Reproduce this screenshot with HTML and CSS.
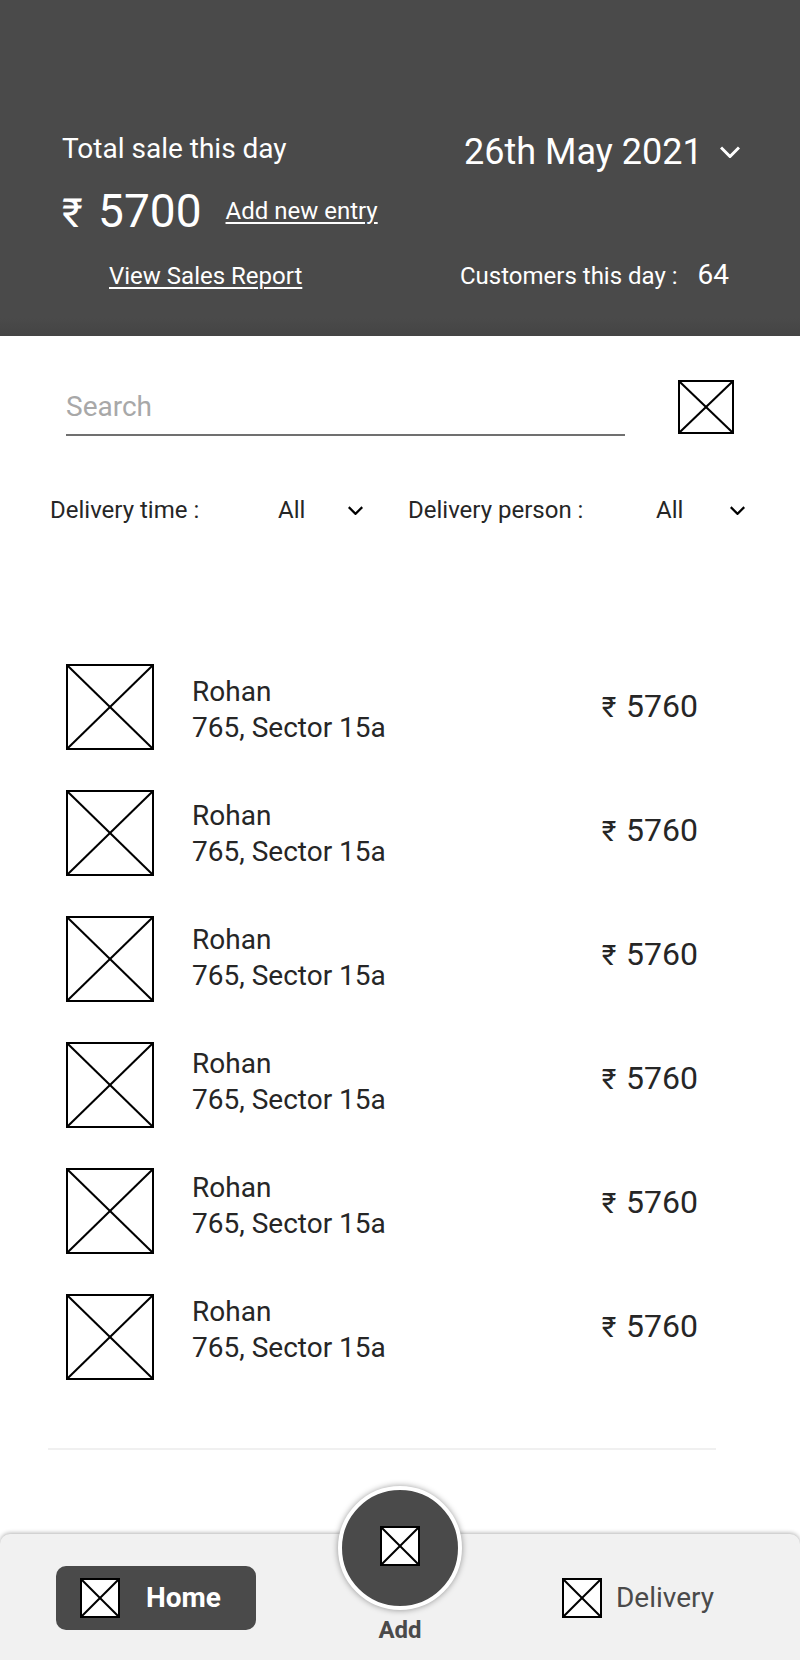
FILE: index.html
```html
<!DOCTYPE html>
<html lang="en">
<head>
  <meta charset="UTF-8">
  <meta name="viewport" content="width=device-width, initial-scale=1.0">
  <title>Daily Sales</title>
  <link rel="stylesheet" href="styles.css">
</head>
<body>
  <!-- shared icon shapes -->
  <svg class="sprite" aria-hidden="true">
    <symbol id="cross">
      <line x1="0" y1="0" x2="100%" y2="100%"/>
      <line x1="100%" y1="0" x2="0" y2="100%"/>
    </symbol>
    <symbol id="chevron" viewBox="0 0 20 12">
      <path d="M1 1.5 L10 10.5 L19 1.5"/>
    </symbol>
  </svg>

  <header class="header">
    <div class="row sale-row">
      <span class="total-label">Total sale this day</span>
      <div class="dropdown date">
        <select aria-label="Date">
          <option>26th May 2021</option>
        </select>
        <svg class="chevron" aria-hidden="true"><use href="#chevron"/></svg>
      </div>
    </div>
    <div class="row amount-row">
      <span class="total"><span class="rupee">₹</span> 5700</span>
      <a href="#">Add new entry</a>
    </div>
    <div class="row report-row">
      <a href="#">View Sales Report</a>
      <div class="customers">Customers this day : <span>64</span></div>
    </div>
  </header>

  <main>
    <form class="search">
      <input type="text" placeholder="Search" aria-label="Search">
      <button type="submit" aria-label="Search">
        <svg class="box" aria-hidden="true"><use href="#cross"/></svg>
      </button>
    </form>

    <div class="filters">
      <label for="time">Delivery time :</label>
      <div class="dropdown">
        <select id="time">
          <option>All</option>
        </select>
        <svg class="chevron" aria-hidden="true"><use href="#chevron"/></svg>
      </div>
      <label for="person">Delivery person :</label>
      <div class="dropdown">
        <select id="person">
          <option>All</option>
        </select>
        <svg class="chevron" aria-hidden="true"><use href="#chevron"/></svg>
      </div>
    </div>

    <div class="sales">
      <div class="thumbs" aria-hidden="true">
        <svg class="box"><use href="#cross"/></svg>
        <svg class="box"><use href="#cross"/></svg>
        <svg class="box"><use href="#cross"/></svg>
        <svg class="box"><use href="#cross"/></svg>
        <svg class="box"><use href="#cross"/></svg>
        <svg class="box"><use href="#cross"/></svg>
      </div>
      <ul class="entries">
        <li><div>Rohan<br>765, Sector 15a</div><span class="price"><span class="rupee">₹</span> 5760</span></li>
        <li><div>Rohan<br>765, Sector 15a</div><span class="price"><span class="rupee">₹</span> 5760</span></li>
        <li><div>Rohan<br>765, Sector 15a</div><span class="price"><span class="rupee">₹</span> 5760</span></li>
        <li><div>Rohan<br>765, Sector 15a</div><span class="price"><span class="rupee">₹</span> 5760</span></li>
        <li><div>Rohan<br>765, Sector 15a</div><span class="price"><span class="rupee">₹</span> 5760</span></li>
        <li><div>Rohan<br>765, Sector 15a</div><span class="price"><span class="rupee">₹</span> 5760</span></li>
      </ul>
    </div>
    <hr>
  </main>

  <nav>
    <a class="home" href="#">
      <svg class="box" aria-hidden="true"><use href="#cross"/></svg>
      Home
    </a>
    <button class="add" type="button">
      <span class="circle"><svg class="box" aria-hidden="true"><use href="#cross"/></svg></span>
      Add
    </button>
    <a class="delivery" href="#">
      <svg class="box" aria-hidden="true"><use href="#cross"/></svg>
      Delivery
    </a>
  </nav>
</body>
</html>
```
FILE: styles.css
```css
* {
  box-sizing: border-box;
}
body {
  font-family: Roboto, sans-serif;
  font-size: 24px;
  line-height: 32px;
  margin: 0;
  background-color: white;
  color: #262626;
  display: flex;
  flex-direction: column;
  min-height: 100vh;
}
button,
input,
select {
  font: inherit;
  color: inherit;
  background: none;
  border: none;
  border-radius: 0;
  margin: 0;
  padding: 0;
}
.sprite {
  display: none;
}
.box {
  display: block;
  width: 40px;
  height: 40px;
  flex-shrink: 0;
  border: 2px solid black;
  background-color: white;
  stroke: black;
  stroke-width: 2;
}
.dropdown {
  display: grid;
  align-items: center;
}
.dropdown select,
.dropdown .chevron {
  grid-area: 1 / 1;
}
.dropdown select {
  appearance: none;
  width: 100%;
}
.chevron {
  justify-self: end;
  width: 15px;
  height: 9px;
  fill: none;
  stroke: black;
  stroke-width: 3;
  pointer-events: none;
}
.rupee {
  line-height: 1;
}

/* header */
.header {
  padding: 132px 60px 44px 62px;
  background: linear-gradient(#4a4a4a calc(100% - 18px), #444);
  color: white;
}
.header a {
  color: white;
  text-underline-offset: 3px;
  text-decoration-thickness: 2px;
}
.row {
  display: flex;
}
.sale-row {
  justify-content: space-between;
  align-items: flex-start;
}
.total-label {
  font-size: 28px;
  line-height: 34px;
}
.date {
  width: 276px;
  font-size: 36px;
  line-height: 40px;
}
.date .chevron {
  width: 20px;
  height: 12px;
  stroke: white;
}
.amount-row {
  align-items: center;
  gap: 24px;
  margin-top: 11px;
}
.total {
  font-size: 46px;
  line-height: 56px;
}
.total .rupee {
  font-size: 40px;
  margin-right: 4px;
}
.report-row {
  justify-content: space-between;
  align-items: baseline;
  margin-top: 20px;
  padding: 0 11px 0 47px;
}
.customers span {
  font-size: 28px;
  margin-left: 14px;
}

/* search and filters */
.search {
  display: flex;
  align-items: flex-start;
  gap: 53px;
  padding: 44px 66px 0;
}
.search input {
  flex: 1;
  min-width: 0;
  height: 56px;
  padding-bottom: 2px;
  border-bottom: 2px solid #707070;
  font-size: 28px;
}
.search input::placeholder {
  color: #a8a8a8;
}
.search .box {
  width: 56px;
  height: 54px;
}
.filters {
  display: grid;
  grid-template-columns: 228fr 130fr 248fr 90fr;
  margin-top: 58px;
  padding: 0 54px 0 50px;
}
.filters .dropdown {
  margin-right: 1px;
}
.filters .dropdown:first-of-type {
  margin-right: 45px;
}

/* sales list */
.sales {
  display: flex;
  gap: 38px;
  margin-top: 138px;
  padding: 0 102px 0 66px;
}
.thumbs {
  display: flex;
  flex-direction: column;
  gap: 40px;
}
.thumbs .box {
  width: 88px;
  height: 86px;
}
.entries {
  flex: 1;
  list-style: none;
  margin: 0;
  padding: 10px 0 0;
  display: flex;
  flex-direction: column;
  gap: 52px;
  font-size: 28px;
  line-height: 36px;
}
.entries li {
  display: flex;
  justify-content: space-between;
}
.price {
  font-size: 32px;
  line-height: 64px;
}
.price .rupee {
  font-size: 28px;
  margin-right: 2px;
}
hr {
  height: 2px;
  border: none;
  background-color: #f0f0f0;
  margin: 68px 84px 0 48px;
}

/* bottom bar */
nav {
  display: grid;
  grid-template-columns: 1fr 124px 1fr;
  align-items: start;
  height: 126px;
  margin-top: auto;
  padding: 0 56px;
  background-color: #f1f1f1;
  border-radius: 10px 10px 0 0;
  box-shadow: 0 -1px 4px rgba(0, 0, 0, 0.3);
  color: #4a4a4a;
  font-size: 28px;
}
nav a {
  display: flex;
  align-items: center;
  height: 64px;
  margin-top: 32px;
  color: inherit;
  text-decoration: none;
}
.home {
  width: 200px;
  gap: 26px;
  padding-left: 24px;
  border-radius: 10px;
  background-color: #4a4a4a;
  color: white;
  font-weight: bold;
}
.delivery {
  justify-self: end;
  gap: 14px;
  padding-right: 30px;
}
.add {
  display: flex;
  flex-direction: column;
  align-items: center;
  gap: 4px;
  margin-top: -48px;
  font-size: 24px;
  font-weight: bold;
}
.circle {
  display: flex;
  justify-content: center;
  align-items: center;
  width: 124px;
  height: 124px;
  padding-bottom: 4px;
  border: 4px solid white;
  border-radius: 50%;
  background-color: #4a4a4a;
  box-shadow: 0 0 6px rgba(0, 0, 0, 0.4);
}
```
